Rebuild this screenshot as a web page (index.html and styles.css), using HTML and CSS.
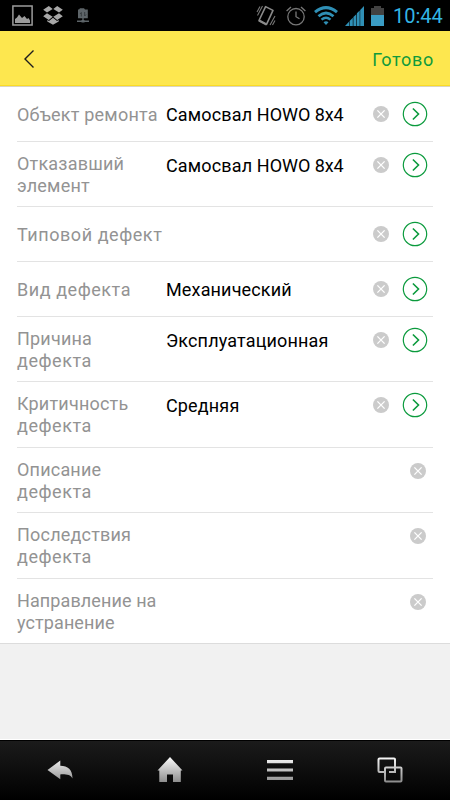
FILE: index.html
```
<!DOCTYPE html>
<html lang="ru">

<head>
    <meta charset="UTF-8">
    <meta name="viewport" content="width=device-width, initial-scale=1.0">
    <title>Дефект</title>
    <link rel="stylesheet" href="styles.css">
</head>

<body>
    <!-- Shared icons -->
    <svg class="sprite" xmlns="http://www.w3.org/2000/svg">
        <symbol id="clear" viewBox="0 0 16 16">
            <circle cx="8" cy="8" r="8" fill="#cbcbcb" />
            <path d="M4.400 4.400l7.200 7.200M11.600 4.400l-7.200 7.200" stroke="#fff" stroke-width="1.300" fill="none" />
        </symbol>
        <symbol id="open" viewBox="0 0 26 26">
            <circle cx="13" cy="13" r="11.700" fill="none" stroke="#0a9a3c" stroke-width="1.200" />
            <path d="M10.900 7.500l5.600 5.500-5.600 5.500" fill="none" stroke="#0a9a3c" stroke-width="1.600" />
        </symbol>
        <linearGradient id="silver" gradientUnits="userSpaceOnUse" x1="0" y1="0" x2="0" y2="28">
            <stop offset="0" stop-color="#fff" />
            <stop offset="1" stop-color="#858585" />
        </linearGradient>
    </svg>

    <div class="status-bar">
        <div class="notifications">
            <svg width="21" height="21" viewBox="0 0 21 21">
                <path d="M.9.9h19.2v19.2H.9z" fill="none" stroke="#9c9c9c" stroke-width="1.5" />
                <path d="M3 18v-4l2-1.500 2-3 3 3.500 2.500-2 2.500 3 1.500-1L18 15.500V18z" fill="#9c9c9c" />
            </svg>
            <svg class="dropbox" width="20" height="19" viewBox="0 0 20 19" fill="#a8a8a8">
                <path d="M5.800 0l3.900 3.100L4 6.600.2 3.700zM14.200 0l5.600 3.700L16 6.600l-5.700-3.500zM4 7.300l5.700 3.500-3.900 3.100-5.600-3.600zM16 7.300l3.800 3-5.600 3.600-3.900-3.100z" />
                <path d="M10 11.800l4 3.200 1.700-1v1.500L10 18.800l-5.700-3.300V14l1.700 1z" />
            </svg>
            <svg width="12" height="15" viewBox="0 0 12 15">
                <path d="M1 1.500h1L3 .3h4l1 1.200h2.800v8.700H1z" fill="#5d6468" />
                <path d="M4.300 8.500V4.500L3 6M7.700 4v4L9 6.500" stroke="#33383b" stroke-width=".9" fill="none" />
                <path d="M6 10v3M0 13.200h12" stroke="#5d6468" stroke-width="1.400" />
                <path d="M4.500 12h3v2.500h-3z" fill="#5d6468" />
            </svg>
        </div>
        <div class="system">
            <svg class="vibrate" width="20" height="22" viewBox="0 0 20 22">
                <path d="M9.600 1.600l7.400 3.800-6.500 14L3 15.500z" fill="none" stroke="#8a8a8a" stroke-width="1.600" stroke-linejoin="round" />
                <path d="M3.500 14.500l7.500 4-1 2-7.500-4z" fill="#8a8a8a" />
                <path d="M1 7l3-5.500M1.500 10.500L6.500 1M14 20l5-9M16.500 20l2.500-4.500" stroke="#777" stroke-width="1.100" />
            </svg>
            <svg class="alarm" width="20" height="20" viewBox="0 0 20 20" fill="none" stroke="#777">
                <circle cx="10" cy="10.700" r="8.200" stroke-width="1.300" />
                <path d="M10 5.500v5.200l3.500 2" stroke-width="1.300" />
                <path d="M.6 5L5 .9M19.400 5L15 .9" stroke-width="1.300" />
            </svg>
            <svg class="wifi" width="24" height="20" viewBox="0 0 24 20" fill="none" stroke="#2f8fb5">
                <path d="M1 6.200Q12-3 23 6.200" stroke-width="3" />
                <path d="M4.500 10.200q7.500-6.500 15 0" stroke-width="2.800" />
                <path d="M7.500 13.700q4.500-4 9 0" stroke-width="2.400" />
                <path d="M9.500 16.200L12 19l2.500-2.800q-2.500-2-5 0z" fill="#2f8fb5" stroke="none" />
            </svg>
            <svg class="signal" width="19" height="20" viewBox="0 0 19 20" fill="#2f8fb5">
                <path d="M0 20l4-4.200V20zM4.600 15l3.200-3.200V20H4.600zM8.400 11l2.900-2.800V20H8.400zM11.900 7.300l2.800-2.800V20h-2.800zM15.200 4L19 0v20h-3.800z" />
            </svg>
            <svg class="battery" width="13" height="20" viewBox="0 0 13 20">
                <path d="M0 2h3V0h7v2h3v8H0z" fill="#424242" />
                <path d="M0 9h13v11H0z" fill="#3a9cc4" />
            </svg>
            <span class="clock">10:44</span>
        </div>
    </div>

    <header>
        <svg class="back" width="12" height="20" viewBox="0 0 12 20">
            <path d="M10.500 1.500L2 9.900l8.500 8.500" fill="none" stroke="#1d1d1d" stroke-width="1.400" />
        </svg>
        <span class="done">Готово</span>
    </header>

    <main>
        <div class="row">
            <div class="label">Объект ремонта</div>
            <div class="value">Самосвал <span class="latin">HOWO 8x4</span></div>
            <svg class="clear"><use href="#clear" /></svg>
            <svg class="open"><use href="#open" /></svg>
        </div>
        <div class="row tall">
            <div class="label">Отказавший элемент</div>
            <div class="value">Самосвал <span class="latin">HOWO 8x4</span></div>
            <svg class="clear"><use href="#clear" /></svg>
            <svg class="open"><use href="#open" /></svg>
        </div>
        <div class="row">
            <div class="label wide">Типовой дефект</div>
            <div class="value"></div>
            <svg class="clear"><use href="#clear" /></svg>
            <svg class="open"><use href="#open" /></svg>
        </div>
        <div class="row">
            <div class="label wide">Вид дефекта</div>
            <div class="value">Механический</div>
            <svg class="clear"><use href="#clear" /></svg>
            <svg class="open"><use href="#open" /></svg>
        </div>
        <div class="row tall">
            <div class="label">Причина <span class="wide">дефекта</span></div>
            <div class="value">Эксплуатационная</div>
            <svg class="clear"><use href="#clear" /></svg>
            <svg class="open"><use href="#open" /></svg>
        </div>
        <div class="row tall extra">
            <div class="label">Критичность <span class="wide">дефекта</span></div>
            <div class="value">Средняя</div>
            <svg class="clear"><use href="#clear" /></svg>
            <svg class="open"><use href="#open" /></svg>
        </div>
        <div class="row tall text">
            <div class="label">Описание <span class="wide">дефекта</span></div>
            <div class="value"></div>
            <svg class="clear"><use href="#clear" /></svg>
        </div>
        <div class="row tall extra text">
            <div class="label">Последствия <span class="wide">дефекта</span></div>
            <div class="value"></div>
            <svg class="clear"><use href="#clear" /></svg>
        </div>
        <div class="row tall text">
            <div class="label narrow">Направление на устранение</div>
            <div class="value"></div>
            <svg class="clear"><use href="#clear" /></svg>
        </div>
    </main>

    <nav>
        <svg width="28" height="28" viewBox="0 0 28 28" fill="url(#silver)">
            <path d="M1.500 14L14.300 4.500v5.200c7.500 0 12.200 4 12.200 12.700-2.200-3.500-5.500-4.200-12.200-4v4.800z" />
        </svg>
        <svg width="28" height="28" viewBox="0 0 28 28" fill="url(#silver)">
            <path d="M14 1l12.500 13.500h-1.700V26H17v-7.500h-6V26H3.300V14.500H1.500z" />
        </svg>
        <svg width="28" height="28" viewBox="0 0 28 28" fill="url(#silver)">
            <path d="M1 4h26v3.200H1zM1 12.400h26v3.200H1zM1 20.800h26V24H1z" />
        </svg>
        <svg width="28" height="28" viewBox="0 0 28 28" fill="none" stroke="url(#silver)" stroke-width="2">
            <path d="M8 16H3.500q-1 0-1-1V3.500q0-1 1-1H18q1 0 1 1V11M13 16h6v-5" />
            <rect x="9" y="11.500" width="16.500" height="14" rx="1" />
        </svg>
    </nav>
</body>

</html>
```

FILE: styles.css
```
* {
    box-sizing: border-box;
    margin: 0;
    padding: 0;
}

body {
    width: 450px;
    height: 800px;
    display: flex;
    flex-direction: column;
    background-color: #f1f1f1;
    font-family: Roboto, sans-serif;
    overflow: hidden;
}

svg {
    display: block;
    flex: none;
}

.sprite {
    position: absolute;
    width: 0;
    height: 0;
}

/* Status bar */
.status-bar {
    height: 31px;
    flex: none;
    background-color: #000;
    display: flex;
    justify-content: space-between;
    padding: 0 7px 0 12px;
}

.notifications,
.system {
    display: flex;
    align-items: center;
}

.notifications {
    gap: 14px;
}

.dropbox {
    margin-left: -4px;
}

.alarm {
    margin-left: 10px;
}

.wifi {
    margin-left: 8px;
}

.signal {
    margin-left: 7px;
}

.battery {
    margin-left: 7px;
}

.clock {
    width: 50px;
    margin-left: 9px;
    color: #33b5e5;
    font-size: 20px;
    line-height: 31px;
    padding-top: 1px;
    white-space: nowrap;
}

header {
    height: 56px;
    flex: none;
    display: flex;
    justify-content: space-between;
    align-items: center;
    padding: 1px 16px 0 23px;
    background-color: #fde74f;
    border-bottom: 1px solid #d9d5c0;
    box-shadow: inset 0 -1px #fbdc25;
}

.done {
    color: #0f9a3c;
    font-size: 18px;
    letter-spacing: 0.7px;
    padding-top: 1px;
}

/* Form rows */
main {
    background-color: #fff;
    border-bottom: 1px solid #dcdcdc;
}

.row {
    height: 55px;
    margin: 0 17px;
    display: flex;
    align-items: center;
    border-bottom: 1px solid #e3e3e3;
}

.row.tall {
    height: 65px;
    align-items: flex-start;
}

.row.tall.extra {
    height: 66px;
}

.row:last-child {
    height: 64px;
    border-bottom: none;
}

.label {
    width: 149px;
    flex: none;
    color: #939393;
    font-size: 18px;
    line-height: 22px;
    letter-spacing: 0.2px;
    padding-top: 1px;
}

.wide {
    letter-spacing: 0.55px;
}

.narrow {
    letter-spacing: 0.1px;
}

.value {
    flex: 1;
    color: #000;
    font-size: 18px;
    line-height: 22px;
    letter-spacing: 0.15px;
    white-space: nowrap;
    padding-top: 1px;
}

.latin {
    letter-spacing: -0.05px;
}

.clear {
    width: 16px;
    height: 16px;
    margin-right: 13px;
}

.open {
    width: 26px;
    height: 26px;
    margin-right: 5px;
}

.tall .label {
    padding-top: 11px;
}

.tall .value {
    padding-top: 13px;
}

.tall .clear {
    margin-top: 15px;
}

.tall .open {
    margin-top: 10px;
}

.text .clear {
    margin-right: 7px;
}

/* Navigation buttons */
nav {
    height: 60px;
    margin-top: auto;
    flex: none;
    display: flex;
    justify-content: space-between;
    align-items: center;
    padding: 0 46px 2px;
    background: linear-gradient(#1b1b1b, #000);
    border-top: 1px solid #000;
    box-shadow: 0 -1px #fff;
}
```
